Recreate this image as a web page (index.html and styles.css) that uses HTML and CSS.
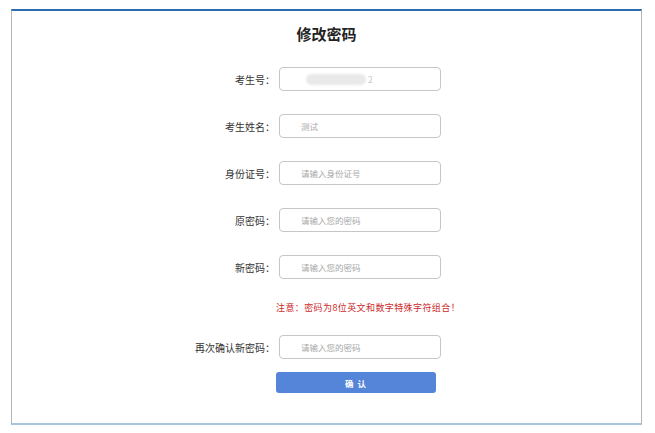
FILE: index.html
```html
<!DOCTYPE html>
<html lang="zh-CN">
<head>
<meta charset="utf-8">
<title>修改密码</title>
<link rel="stylesheet" href="styles.css">
</head>
<body>
<div class="panel">
  <h1 class="title">修改密码</h1>
  <div class="row">
    <label class="label">考生号<span class="colon">：</span></label>
    <div class="field field-value"><span class="redact"></span><span class="tail">2</span></div>
  </div>
  <div class="row">
    <label class="label">考生姓名<span class="colon">：</span></label>
    <input class="field" type="text" placeholder="测试">
  </div>
  <div class="row">
    <label class="label">身份证号<span class="colon">：</span></label>
    <input class="field" type="text" placeholder="请输入身份证号">
  </div>
  <div class="row">
    <label class="label">原密码<span class="colon">：</span></label>
    <input class="field" type="password" placeholder="请输入您的密码">
  </div>
  <div class="row">
    <label class="label">新密码<span class="colon">：</span></label>
    <input class="field" type="password" placeholder="请输入您的密码">
  </div>
  <p class="note">注意<span class="colon">：</span>密码为8位英文和数字特殊字符组合<span class="colon">！</span></p>
  <div class="row row-confirm">
    <label class="label">再次确认新密码<span class="colon">：</span></label>
    <input class="field" type="password" placeholder="请输入您的密码">
  </div>
  <button class="submit" type="button">确 认</button>
</div>
</body>
</html>
```

FILE: styles.css
```css
html, body {
  margin: 0;
  padding: 0;
  background: #ffffff;
}
body {
  font-family: "Noto Sans CJK SC", "Noto Sans", "Liberation Sans", sans-serif;
  color: #333333;
  padding-top: 9px;
}
.panel {
  box-sizing: border-box;
  margin-left: 11px;
  width: 631px;
  height: 416px;
  border-top: 2px solid #2d6cb3;
  border-left: 1px solid #b5b5b5;
  border-right: 1px solid #b5b5b5;
  border-bottom: 2px solid #a9c6e0;
  display: flex;
  flex-direction: column;
}
.title {
  margin: 13px 0 0;
  font-size: 15px;
  line-height: 20px;
  font-weight: bold;
  text-align: center;
  color: #222222;
}
.row {
  display: flex;
  align-items: center;
  height: 24px;
  margin-top: 23px;
  column-gap: 4px;
}
.row-confirm {
  margin-top: 21px;
}
.label {
  width: 263px;
  text-align: right;
  font-size: 10px;
  color: #333333;
  white-space: nowrap;
}
.colon {
  font-family: "Noto Sans CJK TC", "Noto Sans CJK SC", sans-serif;
}
.field {
  box-sizing: border-box;
  width: 162px;
  height: 24px;
  margin: 0;
  padding: 0 0 0 21px;
  border: 1px solid #c6c6c6;
  border-radius: 4px;
  background: #ffffff;
  font-family: inherit;
  font-size: 8.5px;
  color: #555555;
  outline: none;
}
.field::placeholder {
  color: #a8a8a8;
}
.field-value {
  display: flex;
  align-items: center;
  padding-left: 26px;
}
.redact {
  width: 60px;
  height: 11px;
  border-radius: 6px;
  background: #e9e9e9;
  filter: blur(1.2px);
}
.tail {
  margin-left: 2px;
  font-size: 8.5px;
  color: #c8c8c8;
}
.note {
  margin: 23px 0 0 264px;
  font-size: 9px;
  line-height: 12px;
  letter-spacing: 0.4px;
  color: #cc2b2b;
  white-space: nowrap;
}
.submit {
  margin: 13px 0 0 264px;
  width: 160px;
  height: 21px;
  padding: 0;
  border: none;
  border-radius: 3px;
  background: #5585d9;
  color: #ffffff;
  font-family: inherit;
  font-size: 8.5px;
  font-weight: bold;
  letter-spacing: 1px;
}
```
